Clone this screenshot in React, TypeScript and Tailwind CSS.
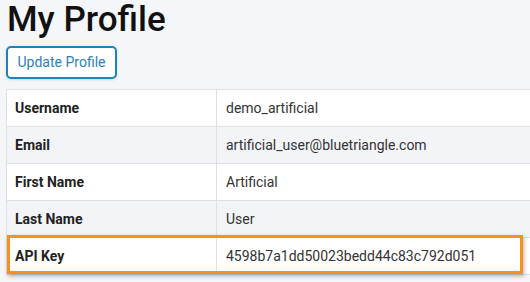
import React from "react";

const rows: [string, string][] = [
  ["Username", "demo_artificial"],
  ["Email", "artificial_user@bluetriangle.com"],
  ["First Name", "Artificial"],
  ["Last Name", "User"],
  ["API Key", "4598b7a1dd50023bedd44c83c792d051"],
];

export default function App() {
  return (
    <div
      className="w-[530px] h-[282px] overflow-hidden bg-[#f5f6fa] relative"
      style={{ fontFamily: "Roboto, 'Liberation Sans', sans-serif" }}
    >
      <div className="pl-[6px] pt-[0px]">
        <h1 className="text-[35px] leading-[40px] font-medium text-[#111] pl-[1px]">My Profile</h1>
        <button className="mt-[6px] h-[33px] w-[111px] border-2 border-[#1b84b8] rounded-[5px] text-[14px] text-[#2b82b8] bg-white shadow-sm">
          Update Profile
        </button>
        <table className="mt-[10px] w-[580px] border-collapse bg-white text-[14px]">
          <tbody>
            {rows.map(([k, v], i) => (
              <tr key={k} className={i % 2 === 1 ? "bg-[#f3f4f8]" : "bg-white"}>
                <td className="w-[210px] h-[37px] border border-[#dfe0e4] pl-[8px] font-bold text-[#222]">{k}</td>
                <td className="h-[37px] border border-[#dfe0e4] pl-[9px] text-[#333]">{v}</td>
              </tr>
            ))}
          </tbody>
        </table>
      </div>
      <div className="absolute left-[7px] top-[235px] w-[516px] h-[39px] border-[3px] border-[#f7901e] shadow-[1px_2px_4px_rgba(0,0,0,0.3)]" />
    </div>
  );
}
